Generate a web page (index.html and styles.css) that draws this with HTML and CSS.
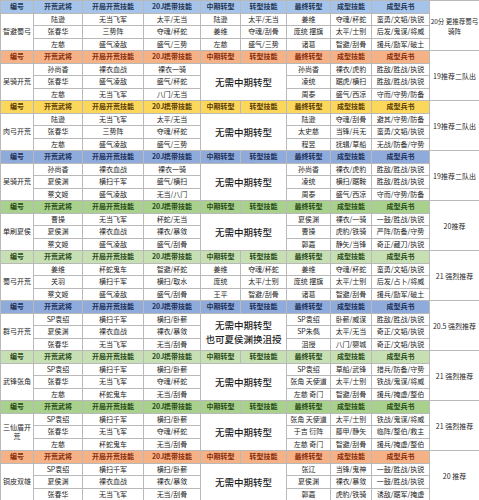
FILE: index.html
```html
<!DOCTYPE html>
<html lang="zh-CN">
<head>
<meta charset="utf-8">
<title>开荒阵容</title>
<link rel="stylesheet" href="styles.css">
</head>
<body>
<table class="sheet">
<colgroup>
<col class="c1"><col class="c2"><col class="c3"><col class="c4"><col class="c5"><col class="c6"><col class="c7"><col class="c8"><col class="c9"><col class="c10">
</colgroup>
<tbody>
<tr class="hd blue1"><th>编号</th><th>开荒武将</th><th>开局开荒技能</th><th>20J携带技能</th><th>中期转型</th><th>转型技能</th><th>最终转型</th><th>成型技能</th><th>成型兵书</th><td class="note first" rowspan="4"><span class="line">20分 更推荐蜀弓</span><br>骑阵</td></tr>
<tr><td class="grp" rowspan="3">智避蜀弓</td><td>陆逊</td><td>无当飞军</td><td>太平/无当</td><td>陆逊</td><td>太平/无当</td><td>姜维</td><td>夺魂/杯蛇</td><td>蛮勇/文韬/执锐</td></tr>
<tr><td>张春华</td><td>三势阵</td><td>夺魂/杯蛇</td><td>姜维</td><td>夺魂/刮骨</td><td>庞统 摆旗</td><td>太平/士别</td><td>后发/鬼谋/将威</td></tr>
<tr><td>左慈</td><td>盛气凌敌</td><td>盛气/三势</td><td>左慈</td><td>盛气/三势</td><td>诸葛</td><td>智避/刮骨</td><td>援兵/励军/破土</td></tr>

<tr class="hd orange"><th>编号</th><th>开荒武将</th><th>开局开荒技能</th><th>20J携带技能</th><th>中期转型</th><th>转型技能</th><th>最终转型</th><th>成型技能</th><th>成型兵书</th><td class="note" rowspan="4">19推荐二队出</td></tr>
<tr><td class="grp" rowspan="3">吴骑开荒</td><td>孙尚香</td><td>裸衣血战</td><td>裸衣一骑</td><td class="mid" colspan="2" rowspan="3">无需中期转型</td><td>孙尚香</td><td>裸衣/虎豹</td><td>胜敌/胜战/执锐</td></tr>
<tr><td>张春华</td><td>盛气凌敌</td><td>盛气/杯蛇</td><td>凌统</td><td>踞虎/横扫</td><td>胜敌/胜战/执锐</td></tr>
<tr><td>左慈</td><td>无当飞军</td><td>八门/无当</td><td>周泰</td><td>盛气/西凉</td><td>守而/守势/防备</td></tr>

<tr class="hd yellow"><th>编号</th><th>开荒武将</th><th>开局开荒技能</th><th>20J携带技能</th><th>中期转型</th><th>转型技能</th><th>最终转型</th><th>成型技能</th><th>成型兵书</th><td class="note" rowspan="4">19推荐二队出</td></tr>
<tr><td class="grp" rowspan="3">肉弓开荒</td><td>陆逊</td><td>无当飞军</td><td>太平/无当</td><td class="mid" colspan="2" rowspan="3">无需中期转型</td><td>陆逊</td><td>夺魂/刮骨</td><td>避其/守势/防备</td></tr>
<tr><td>张春华</td><td>三势阵</td><td>夺魂/杯蛇</td><td>太史慈</td><td>当锋/兵无</td><td>蛮勇/文韬/执锐</td></tr>
<tr><td>左慈</td><td>盛气凌敌</td><td>盛气/三势</td><td>程昱</td><td>抚辑/草船</td><td>无战/防备/守势</td></tr>

<tr class="hd blue2"><th>编号</th><th>开荒武将</th><th>开局开荒技能</th><th>20J携带技能</th><th>中期转型</th><th>转型技能</th><th>最终转型</th><th>成型技能</th><th>成型兵书</th><td class="note" rowspan="4">19推荐二队出</td></tr>
<tr><td class="grp" rowspan="3">吴骑开荒</td><td>孙尚香</td><td>裸衣血战</td><td>裸衣一骑</td><td class="mid" colspan="2" rowspan="3">无需中期转型</td><td>孙尚香</td><td>裸衣/虎豹</td><td>胜敌/胜战/执锐</td></tr>
<tr><td>夏侯渊</td><td>横扫千军</td><td>盛气/横扫</td><td>凌统</td><td>横扫/踞鞍</td><td>胜敌/胜战/执锐</td></tr>
<tr><td>蔡文姬</td><td>盛气凌敌</td><td>无当/八门</td><td>周泰</td><td>盛气/西凉</td><td>守而/守势/防备</td></tr>

<tr class="hd green1"><th>编号</th><th>开荒武将</th><th>开局开荒技能</th><th>20J携带技能</th><th>中期转型</th><th>转型技能</th><th>最终转型</th><th>成型技能</th><th>成型兵书</th><td class="note" rowspan="4">20推荐</td></tr>
<tr><td class="grp" rowspan="3">单刷夏侯</td><td>曹操</td><td>无当飞军</td><td>杯蛇/无当</td><td class="mid" colspan="2" rowspan="3">无需中期转型</td><td>夏侯渊</td><td>裸衣/一骑</td><td>一鼓/胜战/执锐</td></tr>
<tr><td>夏侯渊</td><td>裸衣血战</td><td>裸衣/暴敛</td><td>曹操</td><td>虎豹/铁骑</td><td>严阵/防备/守势</td></tr>
<tr><td>蔡文姬</td><td>盛气凌敌</td><td>盛气/刮骨</td><td>郭嘉</td><td>静矢/当锋</td><td>奇正/藏刀/执锐</td></tr>

<tr class="hd green2"><th>编号</th><th>开荒武将</th><th>开局开荒技能</th><th>20J携带技能</th><th>中期转型</th><th>转型技能</th><th>最终转型</th><th>成型技能</th><th>成型兵书</th><td class="note" rowspan="4">21 强烈推荐</td></tr>
<tr><td class="grp" rowspan="3">蜀弓开荒</td><td>姜维</td><td>杯蛇鬼车</td><td>智避/杯蛇</td><td>姜维</td><td>夺魂/杯蛇</td><td>姜维</td><td>夺魂/杯蛇</td><td>蛮勇/文韬/执锐</td></tr>
<tr><td>关羽</td><td>横扫千军</td><td>横扫/取水</td><td>庞统</td><td>太平/士别</td><td>庞统 摆旗</td><td>太平/士别</td><td>后发/占卜/将威</td></tr>
<tr><td>蔡文姬</td><td>盛气凌敌</td><td>盛气/刮骨</td><td>王平</td><td>智避/刮骨</td><td>诸葛</td><td>智避/刮骨</td><td>援兵/励军/破土</td></tr>

<tr class="hd blue2"><th>编号</th><th>开荒武将</th><th>开局开荒技能</th><th>20J携带技能</th><th>中期转型</th><th>转型技能</th><th>最终转型</th><th>成型技能</th><th>成型兵书</th><td class="note" rowspan="4">20.5 强烈推荐</td></tr>
<tr><td class="grp" rowspan="3">群弓开荒</td><td>SP袁绍</td><td>横扫千军</td><td>横扫/卧薪</td><td class="mid two" colspan="2" rowspan="3">无需中期转型<br>也可夏侯渊换沮授</td><td>SP袁绍</td><td>卧薪/威谋</td><td>胜敌/胜战/执锐</td></tr>
<tr><td>夏侯渊</td><td>裸衣血战</td><td>裸衣/暴敛</td><td>SP朱儁</td><td>太平/无当</td><td>奇正/文韬/执锐</td></tr>
<tr><td>张春华</td><td>无当飞军</td><td>无当/刮骨</td><td>沮授</td><td>八门/婴城</td><td>奇正/文韬/执锐</td></tr>

<tr class="hd green2"><th>编号</th><th>开荒武将</th><th>开局开荒技能</th><th>20J携带技能</th><th>中期转型</th><th>转型技能</th><th>最终转型</th><th>成型技能</th><th>成型兵书</th><td class="note" rowspan="4">21 强烈推荐</td></tr>
<tr><td class="grp" rowspan="3">武锋张角</td><td>SP袁绍</td><td>横扫千军</td><td>横扫/卧薪</td><td class="mid" colspan="2" rowspan="3">无需中期转型</td><td>SP袁绍</td><td>草船/武锋</td><td>措兵/防备/守势</td></tr>
<tr><td>张春华</td><td>无当飞军</td><td>夺魂/杯蛇</td><td>张角 天使道</td><td>太平/士别</td><td>铁战/鬼谋/将威</td></tr>
<tr><td>左慈</td><td>杯蛇鬼车</td><td>无当/刮骨</td><td>左慈 奇门</td><td>智避/刮骨</td><td>援兵/掩虚/整伯</td></tr>

<tr class="hd green1"><th>编号</th><th>开荒武将</th><th>开局开荒技能</th><th>20J携带技能</th><th>中期转型</th><th>转型技能</th><th>最终转型</th><th>成型技能</th><th>成型兵书</th><td class="note" rowspan="4">21 强烈推荐</td></tr>
<tr><td class="grp" rowspan="3">三仙盾开荒</td><td>SP袁绍</td><td>横扫千军</td><td>横扫/卧薪</td><td class="mid" colspan="2" rowspan="3">无需中期转型</td><td>张角 天使道</td><td>太平/士别</td><td>铁战/鬼谋/将威</td></tr>
<tr><td>张春华</td><td>无当飞军</td><td>夺魂/杯蛇</td><td>于吉 衍阵</td><td>藤甲/静矢</td><td>临阵/整伯/救主</td></tr>
<tr><td>左慈</td><td>杯蛇鬼车</td><td>无当/刮骨</td><td>左慈 奇门</td><td>智避/刮骨</td><td>援兵/掩虚/整伯</td></tr>

<tr class="hd orange"><th>编号</th><th>开荒武将</th><th>开局开荒技能</th><th>20J携带技能</th><th>中期转型</th><th>转型技能</th><th>最终转型</th><th>成型技能</th><th>成型兵书</th><td class="note" rowspan="4">20 推荐</td></tr>
<tr><td class="grp" rowspan="3">铜皮双雄</td><td>SP袁绍</td><td>横扫千军</td><td>横扫/卧薪</td><td class="mid" colspan="2" rowspan="3">无需中期转型</td><td>张辽</td><td>当锋/鬼神</td><td>一鼓/胜战/执锐</td></tr>
<tr><td>夏侯渊</td><td>裸衣血战</td><td>裸衣/暴敛</td><td>夏侯渊</td><td>裸衣/暴敛</td><td>一鼓/胜战/执锐</td></tr>
<tr><td>张春华</td><td>无当飞军</td><td>无当/刮骨</td><td>郭嘉</td><td>虎豹/铁骑</td><td>诱敌/踞军/掩虚</td></tr>
</tbody>
</table>
</body>
</html>
```

FILE: styles.css
```css
html, body {
  margin: 0;
  padding: 0;
  background: #ffffff;
}

body {
  font-family: "Noto Sans CJK SC", "Noto Sans", sans-serif;
}

.sheet {
  border-collapse: collapse;
  table-layout: fixed;
  width: 479px;
  font-size: 7px;
  color: #262626;
}

.c1 { width: 33px; }
.c2 { width: 49px; }
.c3 { width: 61px; }
.c4 { width: 57px; }
.c5 { width: 40px; }
.c6 { width: 46px; }
.c7 { width: 44px; }
.c8 { width: 41px; }
.c9 { width: 58px; }
.c10 { width: 50px; }

.sheet tr {
  height: 12.5px;
}

.sheet td,
.sheet th {
  border: 1px solid #b9b9b9;
  padding: 0;
  text-align: center;
  vertical-align: middle;
  line-height: 9px;
  white-space: nowrap;
  overflow: hidden;
}

.sheet th {
  font-weight: 700;
}

.sheet .grp {
  white-space: normal;
  padding: 0;
}

.sheet .mid {
  font-size: 9.5px;
  line-height: 14px;
  font-weight: 500;
  color: #1e1e1e;
}

.sheet .mid.two {
  line-height: 14px;
}

.sheet .note {
  white-space: normal;
  font-size: 7px;
  line-height: 10px;
  background: #ffffff;
  padding: 0;
}

.sheet .note.first {
  font-size: 6.5px;
}

.sheet .note .line {
  white-space: nowrap;
}

.blue1 th { background: #a6c4e9; color: #1f3556; }
.blue2 th { background: #8fabdc; color: #1c2f58; }
.orange th { background: #f5b287; color: #8a2a0a; }
.yellow th { background: #fbd85c; color: #5a3a05; }
.green1 th { background: #a9d18e; color: #274a14; }
.green2 th { background: #c6e0b4; color: #2b4a1a; }
```
